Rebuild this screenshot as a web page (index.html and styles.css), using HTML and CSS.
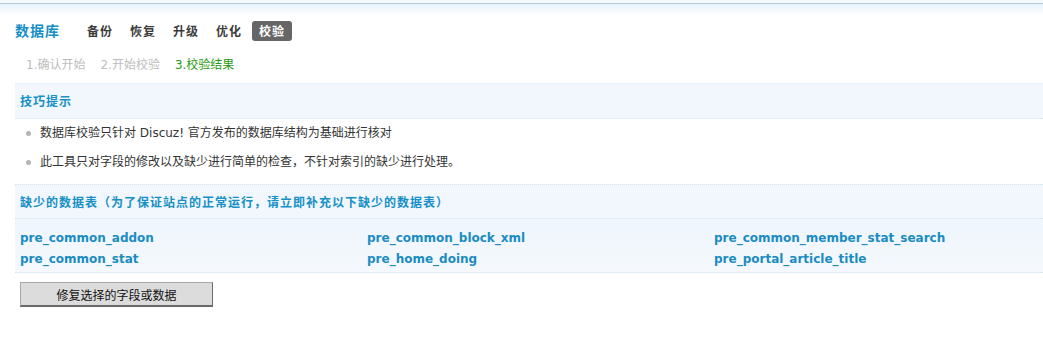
FILE: index.html
```html
<!DOCTYPE html>
<html lang="zh-CN">
<head>
<meta charset="utf-8">
<title>数据库 校验</title>
<link rel="stylesheet" href="styles.css">
</head>
<body>
<div class="topline"></div>
<div class="page">
  <div class="header">
    <h3 class="title">数据库</h3>
    <ul class="tabs">
      <li class="tab">备份</li>
      <li class="tab">恢复</li>
      <li class="tab">升级</li>
      <li class="tab">优化</li>
      <li class="tab active">校验</li>
    </ul>
  </div>
  <div class="steps">
    <span class="step">1.确认开始</span>
    <span class="step">2.开始校验</span>
    <span class="step current">3.校验结果</span>
  </div>
  <div class="partition first">技巧提示</div>
  <ul class="tips">
    <li>数据库校验只针对 Discuz! 官方发布的数据库结构为基础进行核对</li>
    <li>此工具只对字段的修改以及缺少进行简单的检查，不针对索引的缺少进行处理。</li>
  </ul>
  <div class="partition second">缺少的数据表（为了保证站点的正常运行，请立即补充以下缺少的数据表）</div>
  <div class="tables">
    <a class="tbl">pre_common_addon</a>
    <a class="tbl">pre_common_block_xml</a>
    <a class="tbl">pre_common_member_stat_search</a>
    <a class="tbl">pre_common_stat</a>
    <a class="tbl">pre_home_doing</a>
    <a class="tbl">pre_portal_article_title</a>
  </div>
  <button class="btn" type="button">修复选择的字段或数据</button>
</div>
</body>
</html>
```
FILE: styles.css
```css
html, body {
  margin: 0;
  padding: 0;
  background: #fff;
}
body {
  font-family: "DejaVu Sans", "Noto Sans CJK SC", sans-serif;
  font-size: 12px;
  color: #333;
  overflow: hidden;
}
.topline {
  height: 3px;
  background: #f4f9fc;
  border-bottom: 1px solid #b7cad6;
}
.page {
  background: linear-gradient(#e6f2fb, #ffffff 12px);
}
.header {
  display: flex;
  align-items: center;
  padding: 17px 0 0 15px;
}
.title {
  margin: 0 20px 0 0;
  font-size: 14px;
  font-weight: bold;
  letter-spacing: 1px;
  line-height: 18px;
  color: #1690c6;
  font-family: "Noto Sans CJK SC", sans-serif;
  align-self: flex-start;
}
.tabs {
  display: flex;
  list-style: none;
  margin: 0;
  padding: 0;
}
.tab {
  height: 20px;
  line-height: 20px;
  padding: 0 7px;
  margin-right: 3px;
  font-weight: bold;
  letter-spacing: 1px;
  color: #3c3c3c;
  font-family: "Noto Sans CJK SC", sans-serif;
  border-radius: 3px;
}
.tab.active {
  background: #666;
  color: #fff;
}
.steps {
  display: flex;
  gap: 15px;
  margin-top: 14px;
  padding-left: 26px;
  line-height: 20px;
  height: 20px;
}
.step {
  color: #bdbdbd;
}
.step.current {
  color: #2a9a14;
}
.partition {
  margin-left: 15px;
  padding-left: 5px;
  background: #f1f7fd;
  color: #1690c6;
  font-weight: bold;
  letter-spacing: 1px;
  font-family: "Noto Sans CJK SC", sans-serif;
  border-bottom: 1px dotted #d5e3ee;
  white-space: nowrap;
}
.partition.first {
  margin-top: 8px;
  border-top: 1px solid #e8f1f9;
  height: 34px;
  line-height: 34px;
}
.partition.second {
  margin-top: 7px;
  border-top: 1px dotted #d5e3ee;
  height: 33px;
  line-height: 33px;
}
.tips {
  list-style: none;
  margin: 0;
  padding: 0 0 0 40px;
}
.tips li {
  position: relative;
  height: 29px;
  line-height: 29px;
  color: #333;
}
.tips li::before {
  content: "";
  position: absolute;
  left: -14px;
  top: 12px;
  width: 5px;
  height: 5px;
  border-radius: 50%;
  background: #b4b4b4;
}
.tables {
  margin-left: 15px;
  padding: 9px 0 2px 0;
  display: grid;
  grid-template-columns: 347px 347px 347px;
  background: linear-gradient(#eef5fc, #f5f9fd);
  border-bottom: 1px dotted #d5e3ee;
}
.tbl {
  padding-left: 5px;
  line-height: 21px;
  height: 21px;
  font-weight: bold;
  color: #1a8cc2;
  font-family: "DejaVu Sans", sans-serif;
  white-space: nowrap;
}
.btn {
  display: block;
  margin: 9px 0 0 20px;
  width: 193px;
  height: 25px;
  padding: 0;
  background: #dcdcdc;
  border: 1px solid #a8a8a8;
  border-right-color: #6a6a6a;
  border-bottom: 2px solid #6a6a6a;
  font-family: "Noto Sans CJK SC", sans-serif;
  font-size: 12px;
  color: #111;
}
```
